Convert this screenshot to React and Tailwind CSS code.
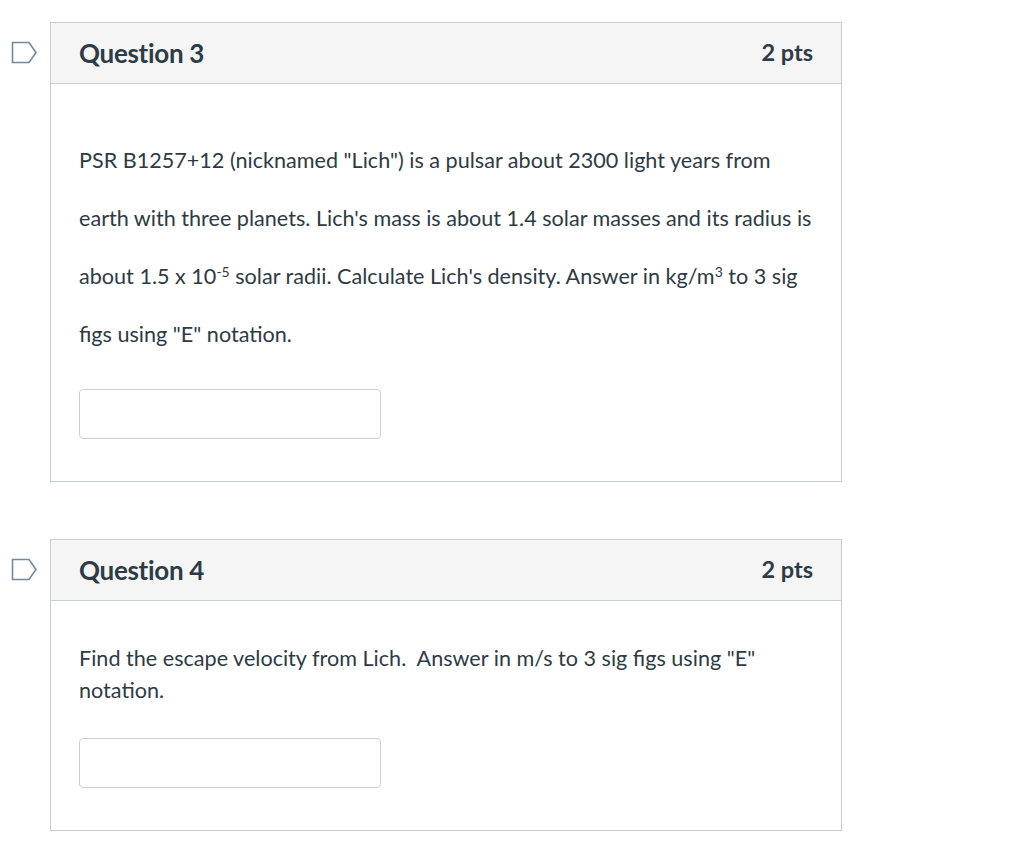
import React from "react";

function Flag() {
  return (
    <svg width="27" height="23" viewBox="0 0 27 23" className="block">
      <path
        d="M1.5 1.5 H18 L25 11.5 L18 21.5 H1.5 Z"
        fill="none"
        stroke="#6d8aa3"
        strokeWidth="1.6"
        strokeLinejoin="miter"
      />
    </svg>
  );
}

function QuestionCard({ title, points, children, bodyTop, bodyLeading, gapInput, bodyBottom }) {
  return (
    <div className="flex">
      <div className="w-[50px] shrink-0 pl-[11px] pt-[19px]">
        <Flag />
      </div>
      <div className="w-[792px] border border-[#c7cdd1]">
        <div className="flex items-center justify-between h-[61px] px-[28px] bg-[#f5f5f5] border-b border-[#c7cdd1]">
          <span className="text-[26px] font-bold text-[#2d3b45] tracking-[-0.3px]">{title}</span>
          <span className="text-[23.5px] font-bold text-[#2d3b45]">{points}</span>
        </div>
        <div className={`px-[28px] ${bodyTop} ${bodyBottom}`}>
          <div className={`text-[21.6px] text-[#2d3b45] ${bodyLeading}`}>{children}</div>
          <input
            type="text"
            className={`block w-[302px] h-[50px] border border-[#cdd1d4] rounded-[4px] bg-white ${gapInput}`}
          />
        </div>
      </div>
    </div>
  );
}

export default function App() {
  return (
    <div
      className="bg-white w-[1024px] h-[861px] pt-[22px] flex flex-col gap-[57px]"
      style={{ fontFamily: "Lato, 'Open Sans', sans-serif" }}
    >
      <QuestionCard
        title="Question 3"
        points="2 pts"
        bodyTop="pt-[47px]"
        bodyBottom="pb-[42px]"
        bodyLeading="leading-[58px]"
        gapInput="mt-[26px]"
      >
        <p className="whitespace-nowrap">
          PSR B1257+12 (nicknamed "Lich") is a pulsar about 2300 light years from
          <br />
          earth with three planets. Lich's mass is about 1.4 solar masses and its radius is
          <br />
          about 1.5 x 10<sup className="text-[14px]">-5</sup> solar radii. Calculate Lich's density. Answer in kg/m
          <sup className="text-[14px]">3</sup> to 3 sig
          <br />
          figs using "E" notation.
        </p>
      </QuestionCard>
      <QuestionCard
        title="Question 4"
        points="2 pts"
        bodyTop="pt-[41px]"
        bodyBottom="pb-[42px]"
        bodyLeading="leading-[32px]"
        gapInput="mt-[32px]"
      >
        <p className="whitespace-nowrap">
          Find the escape velocity from Lich.&nbsp; Answer in m/s to 3 sig figs using "E"
          <br />
          notation.
        </p>
      </QuestionCard>
    </div>
  );
}
